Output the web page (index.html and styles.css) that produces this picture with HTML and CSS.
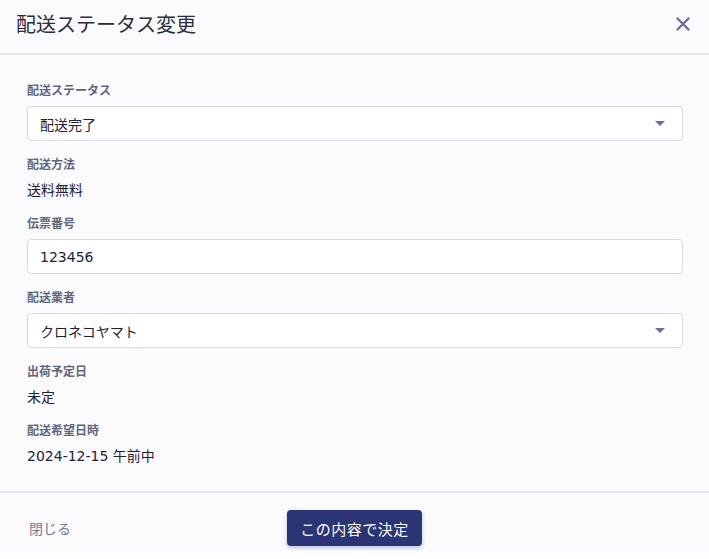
FILE: index.html
```html
<!DOCTYPE html>
<html lang="ja">
<head>
    <meta charset="UTF-8">
    <meta name="viewport" content="width=device-width, initial-scale=1.0">
    <title>配送ステータス変更</title>
    <link rel="stylesheet" href="styles.css">
</head>
<body>
    <div class="modal">
        <div class="modal-header">
            <h1>配送ステータス変更</h1>
            <button class="close-btn" aria-label="閉じる">
                <svg width="14" height="14" viewBox="0 0 14 14">
                    <path d="M1.5 1.5 L12.5 12.5 M12.5 1.5 L1.5 12.5" stroke="#6b7094" stroke-width="2.4" stroke-linecap="round"/>
                </svg>
            </button>
        </div>

        <div class="modal-body">
            <div class="field">
                <label>配送ステータス</label>
                <div class="select">
                    <span>配送完了</span>
                    <span class="caret"></span>
                </div>
            </div>

            <div class="field">
                <label>配送方法</label>
                <p class="value">送料無料</p>
            </div>

            <div class="field">
                <label>伝票番号</label>
                <input type="text" class="text-input" value="123456">
            </div>

            <div class="field">
                <label>配送業者</label>
                <div class="select">
                    <span>クロネコヤマト</span>
                    <span class="caret"></span>
                </div>
            </div>

            <div class="field">
                <label>出荷予定日</label>
                <p class="value">未定</p>
            </div>

            <div class="field">
                <label>配送希望日時</label>
                <p class="value">2024-12-15 午前中</p>
            </div>
        </div>

        <div class="modal-footer">
            <a class="close-link" href="#">閉じる</a>
            <button class="primary-btn">この内容で決定</button>
            <span></span>
        </div>
    </div>
</body>
</html>
```

FILE: styles.css
```css
body {
    margin: 0;
    background-color: #fff;
    font-family: "DejaVu Sans", "Noto Sans CJK JP", sans-serif;
    color: #1f2236;
}
.modal {
    background-color: #fbfbfd;
    height: 553px;
    display: flex;
    flex-direction: column;
}
.modal-header {
    display: flex;
    align-items: center;
    justify-content: space-between;
    height: 54px;
    padding: 0 19px 0 16px;
    border-bottom: 2px solid #e4e6ef;
}
.modal-header h1 {
    margin: 0;
    font-family: "Noto Sans CJK JP", sans-serif;
    font-size: 20px;
    font-weight: normal;
    color: #2a2d3e;
    line-height: 1;
    padding-bottom: 5px;
}
.close-btn {
    background: none;
    border: none;
    padding: 0;
    display: flex;
    cursor: pointer;
    margin-top: -6px;
}
.modal-body {
    padding: 24px 26px 25px 27px;
}
.field {
    margin-bottom: 12px;
}
.field:last-child {
    margin-bottom: 0;
}
.field label {
    display: block;
    font-family: "Noto Sans CJK JP", sans-serif;
    font-size: 12px;
    font-weight: bold;
    line-height: 18px;
    padding-top: 2px;
    color: #62667a;
    margin-bottom: 7px;
}
.value {
    margin: 0;
    font-size: 14px;
    line-height: 20px;
    color: #1f2236;
}
.select,
.text-input {
    box-sizing: border-box;
    width: 100%;
    height: 35px;
    border: 1px solid #d8dbe6;
    border-radius: 4px;
    background-color: #fff;
    font-family: inherit;
    font-size: 14px;
    color: #1f2236;
    padding: 0 12px;
}
.select {
    display: flex;
    align-items: center;
    justify-content: space-between;
    padding-right: 17px;
}
.caret {
    width: 0;
    height: 0;
    border-left: 5px solid transparent;
    border-right: 5px solid transparent;
    border-top: 5px solid #6b7094;
}
.text-input {
    display: block;
    outline: none;
}
.modal-footer {
    display: grid;
    grid-template-columns: 1fr auto 1fr;
    align-items: center;
    padding: 17px 29px 7px;
    border-top: 2px solid #e4e6ef;
    margin-top: auto;
}
.close-link {
    font-family: "Noto Sans CJK JP", sans-serif;
    font-size: 14px;
    color: #777a98;
    text-decoration: none;
}
.primary-btn {
    background-color: #2b3474;
    color: #fff;
    border: none;
    border-radius: 4px;
    height: 36px;
    padding: 0 13px;
    font-family: "Noto Sans CJK JP", sans-serif;
    font-size: 15px;
    letter-spacing: 0.5px;
    box-shadow: 0 2px 4px rgba(43, 52, 116, 0.3);
    cursor: pointer;
}
```
